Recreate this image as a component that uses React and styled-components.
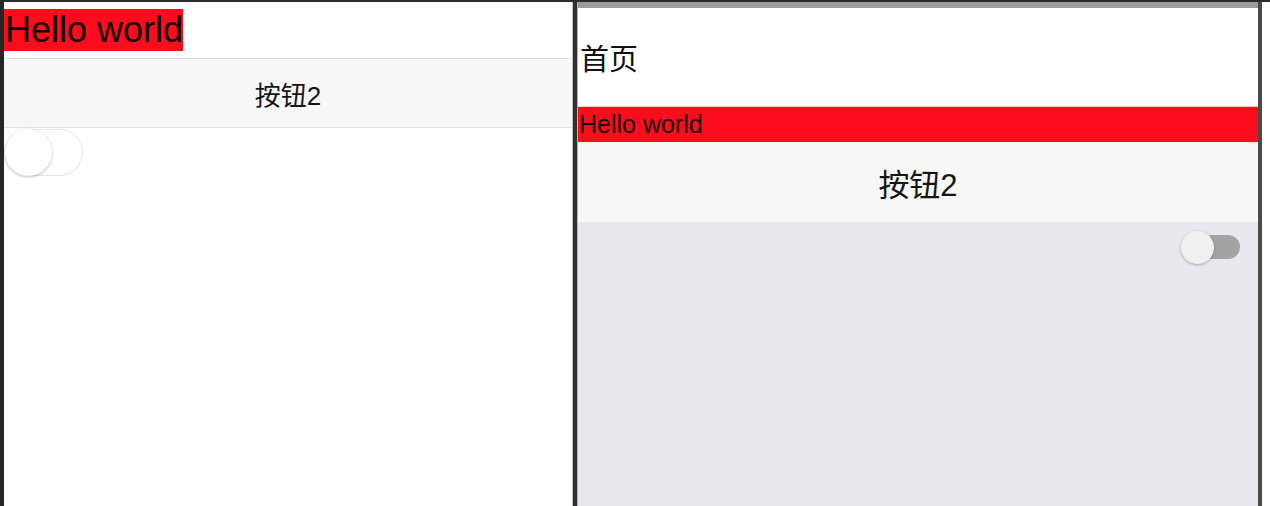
import styled, { createGlobalStyle } from 'styled-components'

const GlobalStyle = createGlobalStyle`
  html, body {
    margin: 0;
    padding: 0;
    background: #ffffff;
  }
  body {
    font-family: "Liberation Sans", "Noto Sans CJK SC", sans-serif;
    color: #111;
  }
`

const Screen = styled.div`
  display: flex;
  width: 1270px;
  height: 506px;
  border-top: 2px solid #2b2b2b;
  box-sizing: border-box;
  overflow: hidden;
`

const LeftPane = styled.div`
  width: 568px;
  border-left: 4px solid #262626;
  display: flex;
  flex-direction: column;
  align-items: flex-start;
  padding-top: 7px;
  background: #fff;
`

const Divider = styled.div`
  width: 6px;
  flex: none;
  background: #2f2f2f;
  border-left: 1px solid #c4c4c4;
  border-right: 1px solid #b9b9b9;
  box-sizing: border-box;
`

const RightPane = styled.div`
  width: 680px;
  flex: none;
  display: flex;
  flex-direction: column;
  border-top: 6px solid #9d9d9d;
  background: #e9e8ee;
`

const RightEdge = styled.div`
  width: 4px;
  flex: none;
  background: #4a4a4a;
`

const Hello = styled.div`
  background: #fd0c1c;
  font-size: ${(p) => p.$size}px;
  line-height: ${(p) => p.$line}px;
  height: ${(p) => p.$line}px;
  padding-left: 1px;
  color: #0c0000;
  align-self: ${(p) => (p.$wide ? 'stretch' : 'flex-start')};
  white-space: nowrap;
`

const ButtonBar = styled.button`
  align-self: stretch;
  height: ${(p) => p.$height}px;
  box-sizing: border-box;
  display: flex;
  align-items: center;
  justify-content: center;
  background: #f7f7f7;
  border: none;
  border-top: ${(p) => (p.$bordered ? '1px solid #dedede' : 'none')};
  border-bottom: ${(p) => (p.$bordered ? '1px solid #e4e4e4' : 'none')};
  font-family: "Liberation Sans", "Noto Sans CJK SC", sans-serif;
  font-size: ${(p) => p.$size}px;
  color: #151515;
  padding: 0;
  margin-top: ${(p) => p.$gap || 0}px;
`

const Header = styled.div`
  height: 98px;
  display: flex;
  align-items: center;
  padding-left: 2px;
  font-size: 29px;
  color: #111;
  background: #fff;
  border-bottom: 1px solid #f3c9c9;
`

const Track = styled.div`
  position: relative;
  width: ${(p) => p.$w}px;
  height: ${(p) => p.$h}px;
  border-radius: ${(p) => p.$h / 2}px;
  background: ${(p) => p.$bg};
  border: ${(p) => (p.$outline ? '1px solid #e3e3e3' : 'none')};
  box-sizing: border-box;
`

const Knob = styled.div`
  position: absolute;
  left: ${(p) => p.$left}px;
  top: ${(p) => p.$top}px;
  width: ${(p) => p.$d}px;
  height: ${(p) => p.$d}px;
  border-radius: 50%;
  background: ${(p) => p.$bg};
  box-shadow: 0 1px 3px rgba(0, 0, 0, 0.28);
`

const LeftSwitchRow = styled.div`
  padding: 1px 0 0 1px;
`

const RightSwitchRow = styled.div`
  display: flex;
  justify-content: flex-end;
  padding: 13px 18px 0 0;
`

export default function App() {
  return (
    <>
      <GlobalStyle />
      <Screen>
        <LeftPane>
          <Hello $size={36} $line={42}>Hello world</Hello>
          <ButtonBar $height={70} $size={26} $bordered $gap={7}>按钮2</ButtonBar>
          <LeftSwitchRow>
            <Track $w={78} $h={47} $bg="#fff" $outline>
              <Knob $left={-1} $top={-1} $d={47} $bg="#fff" />
            </Track>
          </LeftSwitchRow>
        </LeftPane>
        <Divider />
        <RightPane>
          <Header>首页</Header>
          <Hello $size={25} $line={35} $wide>Hello world</Hello>
          <ButtonBar $height={80} $size={31}>按钮2</ButtonBar>
          <RightSwitchRow>
            <Track $w={40} $h={24} $bg="#a3a3a3">
              <Knob $left={-19} $top={-4} $d={33} $bg="#f1f1f1" />
            </Track>
          </RightSwitchRow>
        </RightPane>
        <RightEdge />
      </Screen>
    </>
  )
}
